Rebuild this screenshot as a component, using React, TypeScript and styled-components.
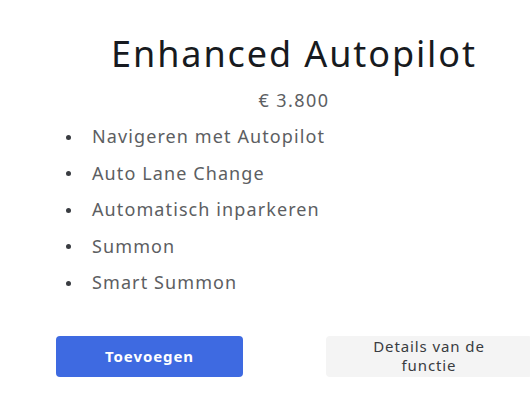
import React from "react";
import styled, { createGlobalStyle } from "styled-components";

const GlobalStyle = createGlobalStyle`
  html, body {
    margin: 0;
    padding: 0;
    background: #ffffff;
    overflow: hidden;
  }
  body {
    font-family: "Noto Sans", "Open Sans", "Liberation Sans", sans-serif;
  }
`;

const features = [
  "Navigeren met Autopilot",
  "Auto Lane Change",
  "Automatisch inparkeren",
  "Summon",
  "Smart Summon",
];

const Card = styled.section`
  width: 476px;
  padding: 30px 0 0 56px;
  display: flex;
  flex-direction: column;
`;

const Title = styled.h1`
  margin: 0;
  text-align: center;
  font-size: 36px;
  line-height: 48px;
  font-weight: 400;
  letter-spacing: 1.9px;
  color: #171a20;
`;

const Price = styled.p`
  margin: 10px 0 0;
  text-align: center;
  font-size: 18px;
  line-height: 24px;
  letter-spacing: 1.4px;
  color: #5c5e62;
`;

const FeatureList = styled.ul`
  list-style: none;
  margin: 6px 0 0;
  padding: 0;
  display: flex;
  flex-direction: column;
`;

const Feature = styled.li`
  display: flex;
  align-items: center;
  height: 36.5px;
  font-size: 18px;
  letter-spacing: 1.1px;
  color: #5c5e62;

  &::before {
    content: "";
    flex: none;
    width: 5px;
    height: 5px;
    border-radius: 50%;
    background: #393c41;
    margin: 2px 21px 0 10px;
  }
`;

const Actions = styled.div`
  display: flex;
  justify-content: space-between;
  margin-top: 35px;
`;

const Button = styled.button<{ $variant: "primary" | "secondary" }>`
  height: 41px;
  border: none;
  border-radius: 4px;
  font-family: inherit;
  font-size: 15px;
  line-height: 19px;
  letter-spacing: 0.9px;
  cursor: pointer;
  width: ${(p) => (p.$variant === "primary" ? "187px" : "206px")};
  background: ${(p) => (p.$variant === "primary" ? "#3e6ae1" : "#f4f4f4")};
  color: ${(p) => (p.$variant === "primary" ? "#ffffff" : "#393c41")};
  font-weight: ${(p) => (p.$variant === "primary" ? 700 : 400)};
  padding: ${(p) => (p.$variant === "primary" ? "0 20px" : "0 40px")};
`;

export default function App() {
  return (
    <>
      <GlobalStyle />
      <Card>
        <Title>Enhanced Autopilot</Title>
        <Price>€ 3.800</Price>
        <FeatureList>
          {features.map((f) => (
            <Feature key={f}>{f}</Feature>
          ))}
        </FeatureList>
        <Actions>
          <Button $variant="primary">Toevoegen</Button>
          <Button $variant="secondary">Details van de functie</Button>
        </Actions>
      </Card>
    </>
  );
}
